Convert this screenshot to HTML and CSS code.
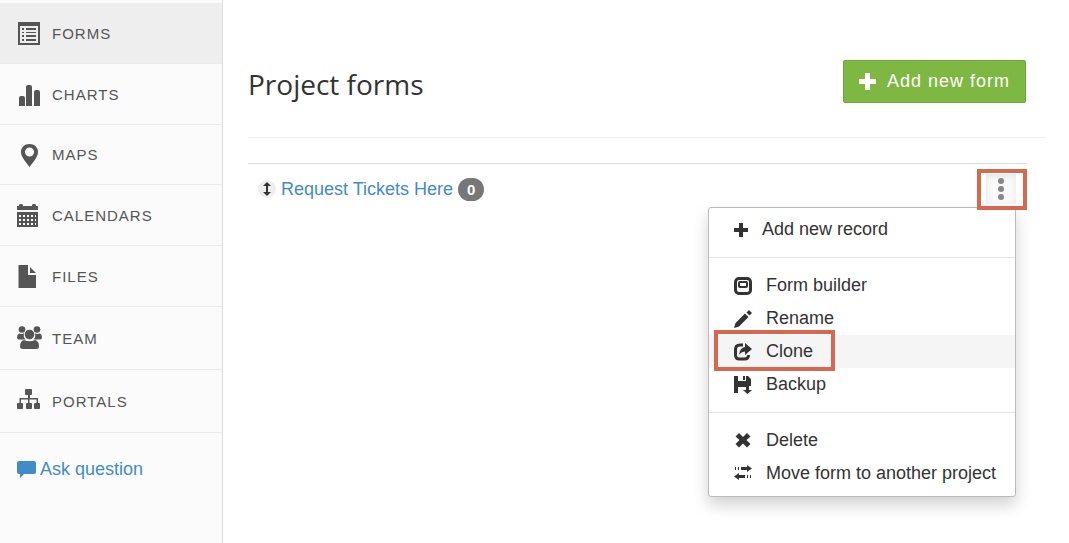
FILE: index.html
```
<!DOCTYPE html>
<html lang="en">
  <head>
    <meta charset="UTF-8" />
    <meta name="viewport" content="width=device-width, initial-scale=1.0" />
    <title>Project forms</title>
    <link rel="stylesheet" href="styles.css">
  </head>
  <body>
    <nav class="sidebar">
      <a class="nav-item active" href="#forms">
        <svg class="nav-icon" viewBox="0 0 26 24">
          <path fill-rule="evenodd" d="M1 1h22v23H1zM3 5v17h18V5z" />
          <path d="M5 7h2v2H5zM9 7h10v2H9zM5 11h2v1H5zM9 11h10v1H9zM5 14h2v2H5zM9 14h10v2H9zM5 18h2v2H5zM9 18h10v2H9z" />
        </svg>
        Forms
      </a>
      <a class="nav-item" href="#charts">
        <svg class="nav-icon" viewBox="0 0 26 24">
          <path d="M2 24v-8q0-2 2-2h2q2 0 2 2v8zM9 24V5q0-2 2-2h2q2 0 2 2v19zM17 24V10q0-2 2-2h2q2 0 2 2v14z" />
        </svg>
        Charts
      </a>
      <a class="nav-item short" href="#maps">
        <svg class="nav-icon" viewBox="0 0 26 24">
          <path fill-rule="evenodd" d="M12.500 1C7.500 1 4 4.500 4 9c0 3 1.500 5.500 3.500 8.500l5 6.500 5-6.500C19.500 14.500 21 12 21 9c0-4.500-3.500-8-8.500-8zM12.500 4.500a4.500 4.500 0 1 1 0 9 4.500 4.500 0 1 1 0-9z" />
        </svg>
        Maps
      </a>
      <a class="nav-item" href="#calendars">
        <svg class="nav-icon" viewBox="0 0 26 24">
          <path d="M0 3h2V2q0-1 2-1t2 1v1h9V2q0-1 2-1t2 1v1h2v4H0z" />
          <path fill-rule="evenodd" d="M0 9h21v15H0zM2 12v2h2v-2zM6 12v2h2v-2zM10 12v2h2v-2zM14 12v2h2v-2zM18 12v2h1v-2zM2 16v2h2v-2zM6 16v2h2v-2zM10 16v2h2v-2zM14 16v2h2v-2zM18 16v2h1v-2zM2 20v2h2v-2zM6 20v2h2v-2zM10 20v2h2v-2zM14 20v2h2v-2zM18 20v2h1v-2z" />
        </svg>
        Calendars
      </a>
      <a class="nav-item" href="#files">
        <svg class="nav-icon" viewBox="0 0 26 24">
          <path d="M1.500 1H11v10h8v13H1.500zM13 3l6 6h-6z" />
        </svg>
        Files
      </a>
      <a class="nav-item tall" href="#team">
        <svg class="nav-icon" viewBox="0 0 26 24">
          <circle cx="5" cy="3.500" r="3.300" />
          <circle cx="20" cy="3.500" r="3.300" />
          <circle cx="12.500" cy="8.500" r="4.800" />
          <path d="M2 7.500q3 1 5-.3-1 4 1.500 6.300H2q-2 0-2-2 0-3 2-4zM23 7.500q-3 1-5-.3 1 4-1.500 6.300H23q2 0 2-2 0-3-2-4zM7 14q5.500 2.500 11 0 4 1 4 6.500 0 2.500-3 2.500H6q-3 0-3-2.500Q3 15 7 14z" />
        </svg>
        Team
      </a>
      <a class="nav-item tall" href="#portals">
        <svg class="nav-icon" viewBox="0 0 26 24">
          <rect x="8" y="0" width="7" height="6" rx="1" />
          <rect x="0" y="14" width="6" height="6" rx="1" />
          <rect x="9" y="14" width="6" height="6" rx="1" />
          <rect x="17" y="14" width="6" height="6" rx="1" />
          <path d="M11 6h2v3h8v5h-1.500v-3.500H12.500V14h-1.500v-3.500H4V14H2.500V9H11z" />
        </svg>
        Portals
      </a>
      <a class="ask" href="#ask">
        <svg class="ask-icon" viewBox="0 0 19 17">
          <path d="M2 0h15q2 0 2 2v9q0 2-2 2H7l-4 4v-4H2q-2 0-2-2V2q0-2 2-2z" />
        </svg>
        Ask question
      </a>
    </nav>

    <main class="content">
      <header class="page-header">
        <h1>Project forms</h1>
        <button class="add-form" type="button">
          <svg class="add-icon" viewBox="0 0 17 17">
            <path d="M6 0h5v6h6v5h-6v6H6v-6H0V6h6z" />
          </svg>
          Add new form
        </button>
      </header>

      <div class="form-list">
        <div class="form-row">
          <span class="drag-handle">
            <svg viewBox="0 0 18 18">
              <path d="M9 2l4 4h-3v6h3l-4 4-4-4h3V6H5z" />
            </svg>
          </span>
          <a class="form-link" href="#form">Request Tickets Here</a>
          <span class="badge">0</span>

          <div class="actions">
            <button class="kebab" type="button" aria-label="Form actions">
              <svg viewBox="0 0 30 30">
                <circle cx="15" cy="7" r="3" />
                <circle cx="15" cy="15" r="3" />
                <circle cx="15" cy="23" r="3" />
              </svg>
            </button>
            <ul class="menu">
              <li>
                <button class="menu-item" type="button">
                  <svg class="icon-small" viewBox="0 0 14 14">
                    <path d="M5 0h4v5h5v4H9v5H5V9H0V5h5z" />
                  </svg>
                  Add new record
                </button>
              </li>
              <li class="divider"></li>
              <li>
                <button class="menu-item" type="button">
                  <svg viewBox="0 0 18 18">
                    <rect class="stroke" x="1.500" y="1.500" width="15" height="15" rx="3.500" />
                    <rect class="stroke thin" x="5" y="5" width="8" height="5" rx="1" />
                  </svg>
                  Form builder
                </button>
              </li>
              <li>
                <button class="menu-item" type="button">
                  <svg viewBox="0 0 18 18">
                    <path d="M0 18l1.500-5L11 3.500 14.500 7 5 16.500zM12.500 2.500L15 0l3 3-2.500 2.500z" />
                  </svg>
                  Rename
                </button>
              </li>
              <li>
                <button class="menu-item selected" type="button">
                  <svg viewBox="0 0 18 18">
                    <path class="stroke" d="M9 2H6Q1.500 2 1.500 6.500V12q0 4 4 4h5q4 0 4-4" />
                    <path d="M11 0l7 6-7 6V8.500q-3 0-6 3Q6 4.500 11 4z" />
                  </svg>
                  Clone
                  <span class="callout"></span>
                </button>
              </li>
              <li>
                <button class="menu-item" type="button">
                  <svg viewBox="0 0 18 18">
                    <path d="M0 0h4v5h8V0h2l3 3v7h-5v1H4v6H0zM9 0h2v4H9z" />
                    <path d="M12 10h3v4h3l-4.500 4L9 14h3z" />
                  </svg>
                  Backup
                </button>
              </li>
              <li class="divider"></li>
              <li>
                <button class="menu-item" type="button">
                  <svg viewBox="0 0 18 18">
                    <path d="M5 1l4 4 4-4 3.500 3.500L12.500 8l4 4-3.500 3.500-4-4-4 4L1.500 12l4-4-4-3.500z" />
                  </svg>
                  Delete
                </button>
              </li>
              <li>
                <button class="menu-item" type="button">
                  <svg viewBox="0 0 18 18">
                    <path d="M1 2h1v3H1zM4 2h1v3H4zM7 2h6V0l5 3.500L13 7V5H7zM5 8v2h6v3H5v2l-5-3.500zM13 10h1v3h-1zM16 10h1v3h-1z" />
                  </svg>
                  Move form to another project
                </button>
              </li>
            </ul>
            <span class="callout"></span>
          </div>
        </div>
      </div>
    </main>
  </body>
</html>
```
FILE: styles.css
```
* {
  box-sizing: border-box;
}
body {
  margin: 0;
  display: flex;
  min-height: 100vh;
  background: #fff;
  color: #333;
  font-family: "Liberation Sans", Arial, sans-serif;
  font-size: 18px;
}
a {
  color: #428bca;
  text-decoration: none;
}
button {
  font: inherit;
  color: inherit;
  border: none;
  background: none;
  padding: 0;
  cursor: pointer;
}
svg {
  display: block;
  flex: none;
  fill: currentColor;
}

/* Sidebar */
.sidebar {
  flex: none;
  width: 223px;
  padding-top: 3px;
  background: #fbfbfb;
  border-right: 1px solid #ddd;
}
.nav-item {
  display: flex;
  align-items: center;
  gap: 9px;
  height: 61px;
  padding-left: 17px;
  border-bottom: 1px solid #ebebeb;
  color: #555;
  font-size: 15px;
  letter-spacing: 1px;
  text-transform: uppercase;
}
.nav-item.short {
  height: 60px;
}
.nav-item.tall {
  height: 63px;
}
.nav-item.active,
.nav-item:hover {
  background: #eee;
}
.nav-icon {
  width: 26px;
  height: 24px;
}
.ask {
  display: flex;
  align-items: center;
  gap: 4px;
  padding: 26px 0 0 17px;
}
.ask-icon {
  width: 19px;
  height: 17px;
}

/* Content */
.content {
  flex: 1;
  padding: 32px 24px 0 25px;
}
.page-header {
  display: flex;
  align-items: center;
  justify-content: space-between;
  height: 106px;
  padding-right: 19px;
  border-bottom: 1px solid #eee;
}
h1 {
  margin: 0 0 2px;
  font-family: "Open Sans", "Noto Sans", sans-serif;
  font-size: 28px;
  font-weight: 400;
}
.add-form {
  display: flex;
  align-items: center;
  gap: 11px;
  height: 43px;
  padding: 0 15px;
  margin-bottom: 6px;
  background: #7eb742;
  border: 1px solid #6fa739;
  border-radius: 2px;
  color: #fff;
  letter-spacing: 1px;
}
.add-icon {
  width: 17px;
  height: 17px;
}
.form-list {
  margin: 25px 19px 0 0;
}
.form-row {
  display: flex;
  align-items: center;
  padding: 10px 10px 0;
  border-top: 1px solid #ddd;
}
.drag-handle {
  width: 18px;
  height: 18px;
  margin-right: 5px;
  border-radius: 50%;
  background: #eee;
}
.badge {
  min-width: 26px;
  margin-left: 5px;
  border-radius: 12px;
  background: #777;
  color: #fff;
  font-size: 15px;
  font-weight: 700;
  line-height: 23px;
  text-align: center;
}

/* Row actions */
.actions {
  position: relative;
  margin-left: auto;
}
.kebab {
  display: block;
  width: 30px;
  height: 30px;
  background: #fafafa;
  box-shadow: inset 0 2px 6px #e4e4e4;
  color: #888;
}
.callout {
  position: absolute;
  border: 4px solid #d5694f;
  pointer-events: none;
}
.actions > .callout {
  inset: -5px -11px -6px -9px;
}
.menu {
  position: absolute;
  top: 33px;
  right: 0;
  width: 308px;
  margin: 0;
  padding: 5px 0 6px;
  list-style: none;
  background: #fff;
  border: 1px solid #bbb;
  border-radius: 3px;
  box-shadow: 0 8px 16px rgba(0, 0, 0, 0.18);
}
.menu-item {
  position: relative;
  display: flex;
  align-items: center;
  gap: 14px;
  width: 100%;
  height: 33px;
  padding-left: 25px;
  white-space: nowrap;
}
.menu-item svg {
  width: 18px;
  height: 18px;
}
.menu-item .icon-small {
  width: 14px;
  height: 14px;
}
.menu-item .stroke {
  fill: none;
  stroke: currentColor;
  stroke-width: 3;
}
.menu-item .thin {
  stroke-width: 2;
}
.menu-item.selected,
.menu-item:hover {
  background: #f5f5f5;
}
.menu-item .callout {
  inset: -5px auto -3px 5px;
  width: 121px;
}
.divider {
  height: 1px;
  margin: 11px 0;
  background: #e5e5e5;
}
```
